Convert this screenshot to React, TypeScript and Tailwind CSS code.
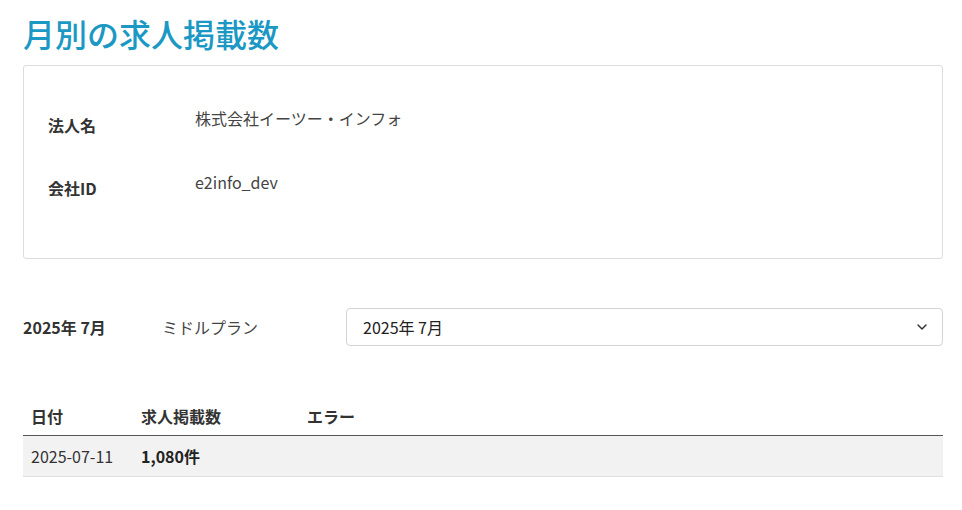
import React from "react";
import { ChevronDown } from "lucide-react";

const rows = [{ date: "2025-07-11", count: "1,080件", error: "" }];

export default function App() {
  return (
    <div
      className="w-[962px] h-[510px] bg-white pl-[23px] pr-[19px] pt-[12px] text-[16px] text-[#333]"
      style={{ fontFamily: '"Noto Sans CJK JP", "Noto Sans", sans-serif' }}
    >
      <h1 className="text-[32px] leading-[42px] font-medium text-[#1b98c3]">
        月別の求人掲載数
      </h1>

      <div className="mt-[11px] h-[194px] border border-[#dcdcdc] rounded-[3px] px-[24px] pt-[40px]">
        <div className="flex h-[64px]">
          <div className="w-[147px] mt-[7px] font-bold leading-[24px]">法人名</div>
          <div className="leading-[24px] text-[#444]">株式会社イーツー・インフォ</div>
        </div>
        <div className="flex h-[64px]">
          <div className="w-[147px] mt-[6px] font-bold leading-[24px]">会社ID</div>
          <div className="leading-[24px] text-[#444]">e2info_dev</div>
        </div>
      </div>

      <div className="mt-[49px] flex items-center h-[38px]">
        <div className="w-[139px] font-bold">2025年 7月</div>
        <div className="w-[184px] text-[#444]">ミドルプラン</div>
        <div className="flex-1 h-[38px] border border-[#d4d4d4] rounded-[4px] flex items-center justify-between pl-[16px] pr-[12px] text-[#222]">
          <span>2025年 7月</span>
          <ChevronDown size={16} strokeWidth={2.2} className="text-[#333]" />
        </div>
      </div>

      <table className="mt-[51px] w-full border-collapse text-left">
        <thead>
          <tr className="border-b border-[#555]">
            <th className="w-[110px] pl-[8px] h-[38px] font-bold">日付</th>
            <th className="w-[166px] pl-[8px] font-bold">求人掲載数</th>
            <th className="pl-[8px] font-bold">エラー</th>
          </tr>
        </thead>
        <tbody>
          {rows.map((r) => (
            <tr key={r.date} className="bg-[#f2f2f2] border-b border-[#e0e0e0]">
              <td className="pl-[8px] h-[41px] text-[#333]">{r.date}</td>
              <td className="pl-[8px] font-bold text-[#222]">{r.count}</td>
              <td className="pl-[8px]">{r.error}</td>
            </tr>
          ))}
        </tbody>
      </table>
    </div>
  );
}
